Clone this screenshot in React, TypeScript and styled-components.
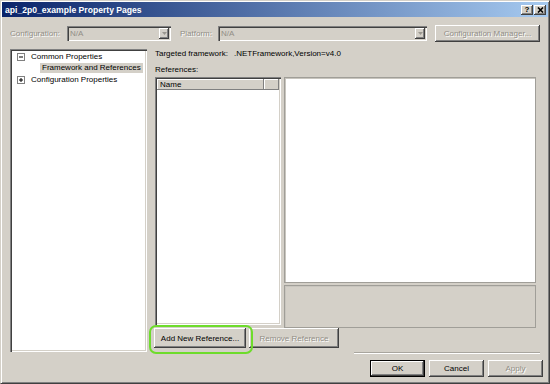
import React from "react";
import styled, { createGlobalStyle, css } from "styled-components";

const GlobalStyle = createGlobalStyle`
  html, body { margin: 0; padding: 0; background: #D4D0C8; }
  body { font-family: "Liberation Sans", Arial, sans-serif; font-size: 8px; color: #000; }
  * { box-sizing: border-box; }
`;

const Window = styled.div`
  width: 550px;
  height: 384px;
  background: #d4d0c8;
  border-top: 1px solid #d4d0c8;
  border-left: 1px solid #d4d0c8;
  border-right: 1px solid #404040;
  border-bottom: 1px solid #404040;
  box-shadow: inset 1px 1px #fff, inset -1px -1px #808080;
  padding: 1px;
  display: flex;
  flex-direction: column;
`;

const TitleBar = styled.div`
  height: 15px;
  background: linear-gradient(to right, #0a246a, #a6caf0);
  display: flex;
  align-items: center;
  justify-content: space-between;
  padding: 0 2px 0 3px;
`;

const TitleText = styled.span`
  color: #fff;
  font-weight: bold;
  font-size: 8.6px;
  white-space: nowrap;
`;

const CaptionButtons = styled.div`
  display: flex;
  gap: 1px;
`;

const CaptionButton = styled.div`
  width: 12px;
  height: 10px;
  background: #d4d0c8;
  box-shadow: inset -1px -1px #404040, inset 1px 1px #fff, inset -2px -2px #808080;
  display: flex;
  align-items: center;
  justify-content: center;
  font-weight: bold;
  font-size: 8px;
  line-height: 1;
  color: #000;
`;

const Body = styled.div`
  flex: 1;
  display: flex;
  flex-direction: column;
  padding: 8px 8px 0 8px;
`;

const ConfigRow = styled.div`
  display: flex;
  align-items: center;
  height: 17px;
`;

const Label = styled.span<{ $w: number; $disabled?: boolean }>`
  width: ${(p) => p.$w}px;
  flex: none;
  white-space: nowrap;
  ${(p) =>
    p.$disabled &&
    css`
      color: #918e86;
      text-shadow: 1px 1px 0 #fff;
    `}
`;

const Combo = styled.div<{ $w: number }>`
  width: ${(p) => p.$w}px;
  height: 15px;
  flex: none;
  background: #d4d0c8;
  box-shadow: inset 1px 1px #808080, inset 2px 2px #404040, inset -1px -1px #fff, inset -2px -2px #d4d0c8;
  display: flex;
  align-items: center;
  padding: 2px;
`;

const ComboText = styled.span`
  flex: 1;
  padding-left: 1px;
  color: #918e86;
`;

const ComboArrow = styled.div`
  width: 10px;
  height: 11px;
  background: #d4d0c8;
  box-shadow: inset -1px -1px #404040, inset 1px 1px #fff, inset -2px -2px #808080;
  display: flex;
  align-items: center;
  justify-content: center;
`;

const Button = styled.button<{ $w: number; $h?: number; $default?: boolean; $disabled?: boolean }>`
  width: ${(p) => p.$w}px;
  height: ${(p) => p.$h ?? 17}px;
  flex: none;
  font-family: "Liberation Sans", Arial, sans-serif;
  font-size: 8px;
  background: #d4d0c8;
  border: none;
  padding: 0;
  color: #000;
  white-space: nowrap;
  box-shadow: inset -1px -1px #404040, inset 1px 1px #fff, inset -2px -2px #808080;
  ${(p) =>
    p.$disabled &&
    css`
      color: #918e86;
      text-shadow: 1px 1px 0 #fff;
    `}
  ${(p) =>
    p.$default &&
    css`
      box-shadow: inset 0 0 0 1px #000, inset -2px -2px #404040, inset 2px 2px #fff, inset -3px -3px #808080;
    `}
`;

const MainRow = styled.div`
  display: flex;
  gap: 8px;
  height: 303px;
  margin-top: 7px;
`;

const TreePanel = styled.div`
  width: 137px;
  flex: none;
  background: #fff;
  box-shadow: inset 1px 1px #808080, inset 2px 2px #404040, inset -1px -1px #fff, inset -2px -2px #d4d0c8;
  padding: 2px;
  display: flex;
  flex-direction: column;
`;

const TreeRow = styled.div<{ $indent: number }>`
  height: 11.5px;
  display: flex;
  align-items: center;
  padding-left: ${(p) => p.$indent}px;
  white-space: nowrap;
`;

const Toggle = styled.div`
  width: 8px;
  height: 8px;
  border: 1px solid #808080;
  background: #fff;
  margin-right: 4px;
  display: flex;
  align-items: center;
  justify-content: center;
`;

const TreeLabel = styled.span<{ $selected?: boolean }>`
  line-height: 10px;
  padding: 0 2px;
  ${(p) =>
    p.$selected &&
    css`
      background: #d4d0c8;
    `}
`;

const RightCol = styled.div`
  flex: 1;
  display: flex;
  flex-direction: column;
`;

const InfoLine = styled.div<{ $mt?: number }>`
  height: 10px;
  line-height: 10px;
  margin-top: ${(p) => p.$mt ?? 0}px;
  display: flex;
  gap: 6px;
  white-space: nowrap;
`;

const ListsArea = styled.div`
  margin-top: 2px;
  height: 251px;
  display: flex;
  gap: 3px;
  margin-right: 4px;
`;

const RefList = styled.div`
  width: 126px;
  height: 248px;
  flex: none;
  background: #fff;
  box-shadow: inset 1px 1px #808080, inset 2px 2px #404040, inset -1px -1px #fff, inset -2px -2px #d4d0c8;
  padding: 2px;
  display: flex;
  flex-direction: column;
`;

const HeaderRow = styled.div`
  height: 11px;
  display: flex;
`;

const HeaderCell = styled.div<{ $w?: number }>`
  ${(p) => (p.$w ? `width: ${p.$w}px; flex: none;` : "flex: 1;")}
  height: 11px;
  background: #d4d0c8;
  box-shadow: inset -1px -1px #808080, inset 1px 1px #fff;
  padding-left: 3px;
  line-height: 11px;
`;

const DetailCol = styled.div`
  flex: 1;
  display: flex;
  flex-direction: column;
  gap: 2px;
`;

const DetailBox = styled.div<{ $h: number; $white?: boolean }>`
  height: ${(p) => p.$h}px;
  background: ${(p) => (p.$white ? "#fff" : "#d4d0c8")};
  border: 1px solid #a09e98;
  box-shadow: inset 1px 1px #c8c5be;
`;

const RefButtons = styled.div`
  display: flex;
  gap: 3px;
  margin-left: -1px;
  height: 20px;
`;

const Highlight = styled.div`
  position: relative;
  display: flex;
`;

const Ring = styled.div`
  position: absolute;
  top: -3px;
  left: -5px;
  right: -7px;
  bottom: -6px;
  border: 2px solid #6edc2c;
  border-radius: 7px;
  pointer-events: none;
`;

const Footer = styled.div`
  display: flex;
  flex-direction: column;
  align-items: flex-end;
`;

const Separator = styled.div`
  width: 186px;
  height: 2px;
  border-top: 1px solid #a8a59e;
  border-bottom: 1px solid #fff;
`;

const FooterButtons = styled.div`
  display: flex;
  gap: 4px;
  margin-top: 6px;
  margin-right: -3px;
`;

const MinusPlus = ({ plus }: { plus?: boolean }) => (
  <svg width="6" height="6" viewBox="0 0 6 6">
    <line x1="1" y1="3" x2="5" y2="3" stroke="#000" strokeWidth="1" />
    {plus && <line x1="3" y1="1" x2="3" y2="5" stroke="#000" strokeWidth="1" />}
  </svg>
);

const Arrow = () => (
  <svg width="5" height="3" viewBox="0 0 5 3">
    <polygon points="0,0 5,0 2.5,3" fill="#9a978f" />
  </svg>
);

const CloseGlyph = () => (
  <svg width="7" height="6" viewBox="0 0 7 6">
    <path d="M1 0.5 L6 5.5 M6 0.5 L1 5.5" stroke="#000" strokeWidth="1.6" />
  </svg>
);

export default function App() {
  return (
    <>
      <GlobalStyle />
      <Window>
        <TitleBar>
          <TitleText>api_2p0_example Property Pages</TitleText>
          <CaptionButtons>
            <CaptionButton>?</CaptionButton>
            <CaptionButton>
              <CloseGlyph />
            </CaptionButton>
          </CaptionButtons>
        </TitleBar>
        <Body>
          <ConfigRow>
            <Label $w={57} $disabled>
              Configuration:
            </Label>
            <Combo $w={104}>
              <ComboText>N/A</ComboText>
              <ComboArrow>
                <Arrow />
              </ComboArrow>
            </Combo>
            <Label $w={38} $disabled style={{ marginLeft: 9 }}>
              Platform:
            </Label>
            <Combo $w={209}>
              <ComboText>N/A</ComboText>
              <ComboArrow>
                <Arrow />
              </ComboArrow>
            </Combo>
            <Button $w={105} $disabled style={{ marginLeft: 8 }}>
              Configuration Manager...
            </Button>
          </ConfigRow>
          <MainRow>
            <TreePanel>
              <TreeRow $indent={5}>
                <Toggle>
                  <MinusPlus />
                </Toggle>
                <TreeLabel>Common Properties</TreeLabel>
              </TreeRow>
              <TreeRow $indent={28}>
                <TreeLabel $selected>Framework and References</TreeLabel>
              </TreeRow>
              <TreeRow $indent={5}>
                <Toggle>
                  <MinusPlus plus />
                </Toggle>
                <TreeLabel>Configuration Properties</TreeLabel>
              </TreeRow>
            </TreePanel>
            <RightCol>
              <InfoLine>
                <span>Targeted framework:</span>
                <span>.NETFramework,Version=v4.0</span>
              </InfoLine>
              <InfoLine $mt={6}>References:</InfoLine>
              <ListsArea>
                <RefList>
                  <HeaderRow>
                    <HeaderCell $w={107}>Name</HeaderCell>
                    <HeaderCell />
                  </HeaderRow>
                </RefList>
                <DetailCol>
                  <DetailBox $h={206} $white />
                  <DetailBox $h={43} />
                </DetailCol>
              </ListsArea>
              <RefButtons>
                <Highlight>
                  <Button $w={92} $h={20}>
                    Add New Reference...
                  </Button>
                  <Ring />
                </Highlight>
                <Button $w={90} $h={20} $disabled>
                  Remove Reference
                </Button>
              </RefButtons>
            </RightCol>
          </MainRow>
          <Footer>
            <Separator />
            <FooterButtons>
              <Button $w={55} $default>
                OK
              </Button>
              <Button $w={55}>Cancel</Button>
              <Button $w={55} $disabled>
                Apply
              </Button>
            </FooterButtons>
          </Footer>
        </Body>
      </Window>
    </>
  );
}
